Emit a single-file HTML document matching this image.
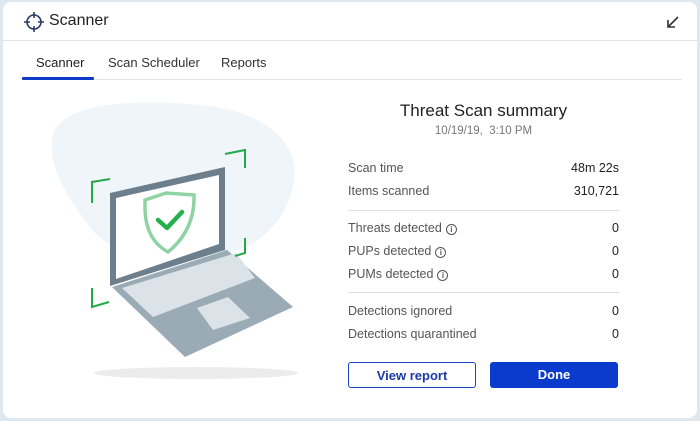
<!DOCTYPE html>
<html><head><meta charset="utf-8"><style>
html,body{margin:0;padding:0;}
body{width:700px;height:421px;background:#dfe8ee;position:relative;overflow:hidden;font-family:"Liberation Sans",sans-serif;color:#222;}
.win{position:absolute;left:3px;top:2px;width:694px;height:416px;background:#fff;border-radius:8px;}
.t{position:absolute;white-space:nowrap;}
.row{position:absolute;left:348px;width:271px;font-size:12.5px;color:#555;}
.row span{position:absolute;right:0;color:#222;}
.i{display:inline-block;width:9px;height:9px;border:1.3px solid #555;border-radius:50%;font-size:8px;line-height:9px;text-align:center;margin-left:4px;vertical-align:0px;font-weight:bold;color:#555;}
.hr{position:absolute;left:348px;width:271px;height:1px;background:#ddd;}
.btn{position:absolute;top:362px;width:128px;height:26px;border-radius:3px;box-sizing:border-box;font-size:13px;font-weight:bold;text-align:center;line-height:25px;}
</style></head><body>
<div class="win">
<svg style="position:absolute;left:19px;top:8px" width="24" height="24" viewBox="0 0 24 24"><circle cx="12" cy="12" r="7" fill="none" stroke="#2a3b66" stroke-width="1.6"/><path d="M12 2v6M12 16v6M2 12h6M16 12h6" stroke="#2a3b66" stroke-width="1.6"/></svg>
<div class="t" style="left:46px;top:10px;font-size:16px;color:#222">Scanner</div>
<svg style="position:absolute;left:662px;top:12px" width="16" height="16" viewBox="0 0 16 16"><path d="M13 3L3 13M3 6v7h7" fill="none" stroke="#333" stroke-width="1.6"/></svg>
<div style="position:absolute;left:0;top:38px;width:694px;height:1px;background:#e2e2e2"></div>
<div class="t" style="left:33px;top:53px;font-size:13px;color:#222">Scanner</div>
<div class="t" style="left:105px;top:53px;font-size:13px;color:#333">Scan Scheduler</div>
<div class="t" style="left:218px;top:53px;font-size:13px;color:#333">Reports</div>
<div style="position:absolute;left:19px;top:77px;width:660px;height:1px;background:#e2e2e2"></div>
<div style="position:absolute;left:19px;top:75px;width:72px;height:3px;background:#0d3bc7;border-radius:1px"></div>
</div>
<svg style="position:absolute;left:0;top:0" width="340" height="421" viewBox="0 0 340 421">
<path d="M55 130 C70 100 150 100 200 105 C260 110 300 140 294 180 C288 220 260 250 210 258 C160 266 110 255 88 225 C70 200 42 160 55 130Z" fill="#f0f5fa"/>
<ellipse cx="196" cy="373" rx="102" ry="6" fill="#ececec"/>
<path d="M112 287 L227 250 L293 307 L185 357 Z" fill="#9aabb5"/>
<path d="M122 288 L236 253 L255 278 L153 317 Z" fill="#dbe3e8"/>
<path d="M197 308 L228 297 L250 318 L213 330 Z" fill="#dbe3e8"/>
<path d="M110 193 L225 167 L225 250 L110 286 Z" fill="#6d7f8c"/>
<path d="M116 198 L219 175 L219 244 L116 279 Z" fill="#fff"/>
<path d="M145 200 L166 193 L194 195 Q195 230 168 252 Q146 240 145 210Z" fill="none" stroke="#8fd3a4" stroke-width="3.5"/>
<path d="M158 220 L167 228 L182 212" fill="none" stroke="#22b14c" stroke-width="4.5" stroke-linecap="round" stroke-linejoin="round"/>
<g fill="none" stroke="#22a94a" stroke-width="2">
<path d="M92 203 V182 L110 179"/><path d="M225 154 L245 150 V168"/><path d="M245 238 V253 L235 256"/><path d="M92 288 V307 L109 302"/>
</g>
</svg>
<div class="t" style="left:348px;width:271px;text-align:center;top:101px;font-size:17px;color:#222">Threat Scan summary</div>
<div class="t" style="left:348px;width:271px;text-align:center;top:125px;font-size:11.5px;color:#777">10/19/19, &nbsp;3:10 PM</div>
<div class="row" style="top:161px">Scan time<span>48m 22s</span></div>
<div class="row" style="top:184px">Items scanned<span>310,721</span></div>
<div class="hr" style="top:210px"></div>
<div class="row" style="top:221px">Threats detected<b class="i">i</b><span>0</span></div>
<div class="row" style="top:244px">PUPs detected<b class="i">i</b><span>0</span></div>
<div class="row" style="top:267px">PUMs detected<b class="i">i</b><span>0</span></div>
<div class="hr" style="top:292px"></div>
<div class="row" style="top:304px">Detections ignored<span>0</span></div>
<div class="row" style="top:327px">Detections quarantined<span>0</span></div>
<div class="btn" style="left:348px;border:1.3px solid #1b44c8;color:#1b3aa8;background:#fff">View report</div>
<div class="btn" style="left:490px;background:#0b3bcc;color:#fff">Done</div>
</body></html>
